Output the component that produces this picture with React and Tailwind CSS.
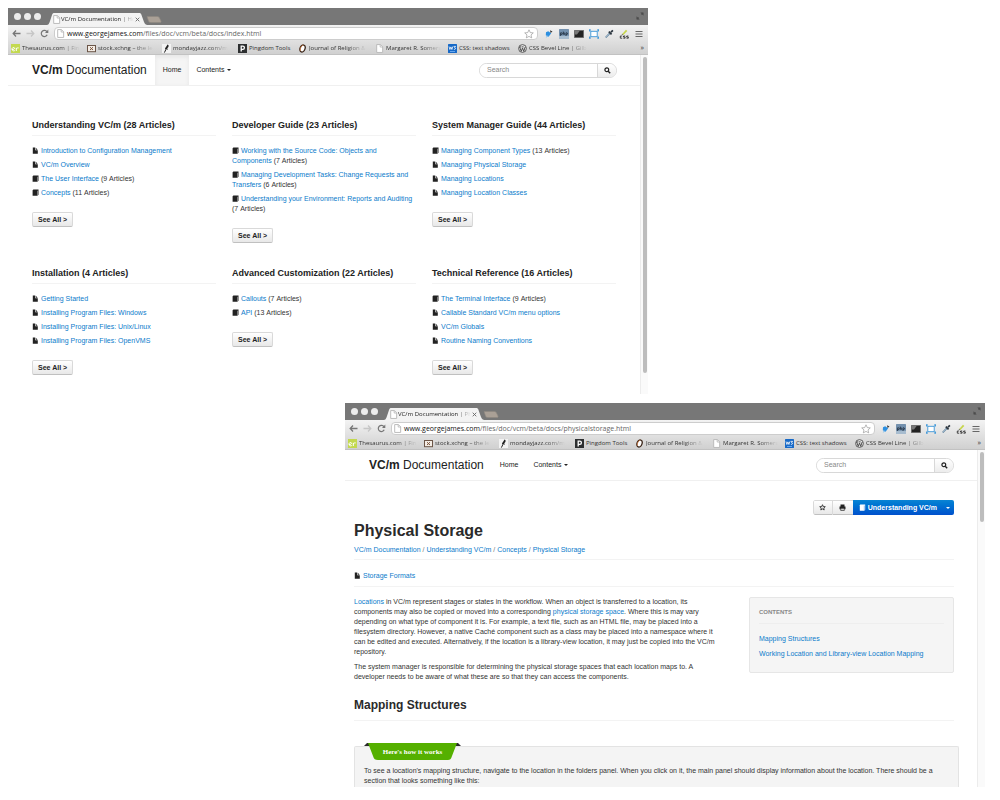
import React from "react";

const bookmarks = [
  { label: "Thesaurus.com | Fin", icon: "thesaurus", width: "w-[76px]", fade: true },
  { label: "stock.xchng – the le", icon: "stock", width: "w-[75px]", fade: true },
  { label: "mondayjazz.com/m", icon: "jazz", width: "w-[76px]", fade: true },
  { label: "Pingdom Tools", icon: "pingdom", width: "w-[60px]" },
  { label: "Journal of Religion &", icon: "journal", width: "w-[77px]", fade: true },
  { label: "Margaret R. Somers", icon: "page", width: "w-[73px]", fade: true },
  { label: "CSS: text shadows", icon: "css", width: "w-[70px]" },
  { label: "CSS Bevel Line | Gilb", icon: "wordpress", width: "w-[76px]", fade: true },
];

const sections = [
  {
    title: "Understanding VC/m (28 Articles)",
    items: [
      { label: "Introduction to Configuration Management" },
      { label: "VC/m Overview" },
      { label: "The User Interface", count: 9 },
      { label: "Concepts", count: 11 },
    ],
  },
  {
    title: "Developer Guide (23 Articles)",
    items: [
      { label: "Working with the Source Code: Objects and Components", count: 7 },
      { label: "Managing Development Tasks: Change Requests and Transfers", count: 6 },
      { label: "Understanding your Environment: Reports and Auditing", count: 7 },
    ],
  },
  {
    title: "System Manager Guide (44 Articles)",
    items: [
      { label: "Managing Component Types", count: 13 },
      { label: "Managing Physical Storage" },
      { label: "Managing Locations" },
      { label: "Managing Location Classes" },
    ],
  },
  {
    title: "Installation (4 Articles)",
    items: [
      { label: "Getting Started" },
      { label: "Installing Program Files: Windows" },
      { label: "Installing Program Files: Unix/Linux" },
      { label: "Installing Program Files: OpenVMS" },
    ],
  },
  {
    title: "Advanced Customization (22 Articles)",
    items: [
      { label: "Callouts", count: 7 },
      { label: "API", count: 13 },
    ],
  },
  {
    title: "Technical Reference (16 Articles)",
    items: [
      { label: "The Terminal Interface", count: 9 },
      { label: "Callable Standard VC/m menu options" },
      { label: "VC/m Globals" },
      { label: "Routine Naming Conventions" },
    ],
  },
];

function PageIcon({ className = "h-2 w-2" }) {
  return (
    <svg viewBox="0 0 8 8" className={className} aria-hidden="true">
      <path d="M1.5.5h3.3L6.8 2.5v5H1.5z" fill="#fff" stroke="#b5b5b5" strokeWidth=".8" />
      <path d="M4.6.5v2.2h2.2" fill="none" stroke="#b5b5b5" strokeWidth=".7" />
    </svg>
  );
}

function BookmarkIcon({ name }) {
  if (name === "page") return <PageIcon className="h-[9px] w-[9px] shrink-0" />;
  return (
    <svg viewBox="0 0 9 9" className="h-[9px] w-[9px] shrink-0" aria-hidden="true">
      {name === "thesaurus" && (
        <>
          <rect width="9" height="9" fill="#c3d94f" />
          <path d="M1 5.5c2 0 2.6-.6 2.6-1.4S1 3.2 1 5s1.6 2.3 2.8 1.6M5.3 7V3.8M5.3 5c.4-.9 1.2-1.3 2.4-1.1" fill="none" stroke="#fff" strokeWidth="1" />
        </>
      )}
      {name === "stock" && (
        <>
          <rect x=".5" y="1.5" width="8" height="6.2" fill="#f4ede6" stroke="#6b5547" />
          <path d="M3 3.2l3 2.8M6 3.2L3 6" stroke="#7d563c" strokeWidth="1" />
        </>
      )}
      {name === "jazz" && (
        <>
          <rect width="9" height="9" fill="#f3f3f3" />
          <path d="M5.5.6c1.6.4 1.3 2.3.2 3.2L4.3 5 3.4 4.1z" fill="#222" />
          <path d="M4.8 3.6L2.4 8.6M3 4.2l2.8 1" stroke="#222" strokeWidth="1" />
        </>
      )}
      {name === "pingdom" && (
        <>
          <rect width="9" height="9" fill="#2d2f30" />
          <path d="M3.2 7.6V2.2h1.6a1.5 1.5 0 010 3.2H3.4" fill="none" stroke="#fff" strokeWidth="1.3" />
        </>
      )}
      {name === "journal" && (
        <>
          <ellipse cx="4.5" cy="4.5" rx="2.5" ry="3.7" transform="rotate(20 4.5 4.5)" fill="#fff" stroke="#3a2417" strokeWidth="1.3" />
          <path d="M2.4 6.8C1.8 4 3.5 1.6 5.2 1" fill="none" stroke="#c8733b" strokeWidth=".8" />
        </>
      )}
      {name === "css" && (
        <>
          <rect width="9" height="9" rx=".6" fill="#1769c7" />
          <path d="M1 2.5l.9 3 1-2.6 1 2.6.9-3M5.6 2.4h2L6.5 3.8c1.6.2 1.2 2-.6 1.6" fill="none" stroke="#fff" strokeWidth=".8" />
          <path d="M2 7.5h5" stroke="#86c1ff" strokeWidth=".7" />
        </>
      )}
      {name === "wordpress" && (
        <>
          <circle cx="4.5" cy="4.5" r="3.9" fill="#e9e9e9" stroke="#4d4d4d" strokeWidth=".9" />
          <path d="M1.6 3l1.7 4.3L4.5 4 5.7 7.3 7.2 3M1.5 2.9h1.8M3.8 2.9h1.8" fill="none" stroke="#4d4d4d" strokeWidth="1" />
        </>
      )}
    </svg>
  );
}

function DocIcon({ book }) {
  return (
    <svg viewBox="0 0 7 7" className="mr-0.5 inline-block h-[7px] w-[7px] align-[-1px]" aria-hidden="true">
      {book ? (
        <path d="M1.4.5h5.1v5.3L5.4 6.8H.6V1.2zM5.1 1.7v4.5h.4V1.7z" fill="#222" fillRule="evenodd" />
      ) : (
        <path d="M.8.5h2.4v2.8h2.6v3.5h-5zM3.800.7l1.900 2H3.800z" fill="#222" />
      )}
    </svg>
  );
}

function Caret({ className }) {
  return (
    <svg viewBox="0 0 4 2" className={className} aria-hidden="true">
      <path d="M0 0h4L2 2z" fill="currentColor" />
    </svg>
  );
}

function ExtensionIcons() {
  return (
    <div className="flex shrink-0 items-center gap-[5px]">
      <button aria-label="Share page">
        <svg viewBox="0 0 11 10" className="h-[10px] w-[11px]">
          <path d="M3 3.2l2.2-.9 3 2-2.6 3.5-2.8-1.6z" fill="#2c8fe0" />
          <path d="M3.5 8.3l1.4-2" stroke="#62b1ed" strokeWidth="1" />
          <path d="M7 1.2l2.5 1.2L7.6 4z" fill="#333" />
        </svg>
      </button>
      <button aria-label="PHP tools">
        <svg viewBox="0 0 10 10" className="h-[10px] w-[10px]">
          <rect width="10" height="10" rx=".6" fill="#7390ad" />
          <rect y="6.8" width="10" height="3.2" fill="#a7bccf" />
          <path d="M1.6 7V3.8h.9c1 0 1 1.7 0 1.7h-.7M4.3 2.6v3.2M4.3 4.4c.3-.9 1.3-.8 1.3 0v1.4M7 7V3.8h.8c1 0 1 1.7 0 1.7h-.7" fill="none" stroke="#1d2938" strokeWidth=".8" />
        </svg>
      </button>
      <button aria-label="Terminal">
        <svg viewBox="0 0 10 10" className="h-[10px] w-[10px]">
          <rect x=".3" y="1.3" width="9.4" height="7.4" fill="#222" stroke="#777" strokeWidth=".6" />
          <path d="M.8 1.8h5L3 5.5H.8z" fill="#777" />
        </svg>
      </button>
      <button aria-label="Resize window">
        <svg viewBox="0 0 10 10" className="h-[10px] w-[10px]">
          <rect x="1.8" y="2.3" width="6.4" height="5.4" fill="#fff" stroke="#3c96d8" strokeWidth=".9" />
          <path d="M0 1h2M8 1h2M0 9h2M8 9h2M.6.5v2M9.4.5v2M.6 7.5v2M9.4 7.5v2" stroke="#3c96d8" strokeWidth="1" />
        </svg>
      </button>
      <button aria-label="Pick colour">
        <svg viewBox="0 0 10 10" className="h-[10px] w-[10px]">
          <path d="M6 4.2L1.7 8.5" stroke="#5e7f9b" strokeWidth="1.7" />
          <path d="M5.8 4.4L2 8.2" stroke="#d6e6f2" strokeWidth=".6" />
          <path d="M4.8 2.6l2.8 2.8M7 3.2l1.9-1.9" stroke="#29333d" strokeWidth="1.7" />
        </svg>
      </button>
      <button aria-label="Edit CSS">
        <svg viewBox="0 0 10 10" className="h-[10px] w-[10px]">
          <path d="M3 5.2l4-4.4 1.3 1.1-4 4z" fill="#c6d548" />
          <path d="M2.6 6l.6-1.2 1 .8z" fill="#555" />
          <path d="M3.2 7H1.3v2.2h1.9M6.2 7H4.5v1h1.6v1.2H4.3M9.4 7H7.7v1h1.6v1.2H7.5" fill="none" stroke="#222" strokeWidth=".8" />
        </svg>
      </button>
      <button aria-label="Menu">
        <svg viewBox="0 0 10 10" className="h-[10px] w-[10px]">
          <path d="M1.5 2.5h7M1.5 5h7M1.5 7.5h7" stroke="#666" strokeWidth="1.1" />
        </svg>
      </button>
    </div>
  );
}

function BrowserWindow({ tabTitle, path, thumb, children, className }) {
  return (
    <section className={`flex w-[65.5%] min-w-[640px] flex-col ${className}`}>
      <div className="flex h-[17px] items-end bg-[#777] pl-[6px] font-['Open_Sans',sans-serif]">
        <div className="mb-1 flex h-[9px] gap-[3px] self-center">
          <span className="mt-[3px] h-[7px] w-[7px] rounded-full bg-[#ececec]" />
          <span className="mt-[3px] h-[7px] w-[7px] rounded-full bg-[#ececec]" />
          <span className="mt-[3px] h-[7px] w-[7px] rounded-full bg-[#ececec]" />
        </div>
        <div className="relative ml-[5px] flex h-[12px] w-[104px] items-center">
          <svg viewBox="0 0 104 12" preserveAspectRatio="none" className="absolute inset-0 h-full w-full" aria-hidden="true">
            <path d="M0 12c3 0 3-1.5 4-4l2-6c.5-1.5 1-2 2.500-2H93c1.500 0 2 .5 2.500 2l2.500 7c1 2.500 2 3 5 3z" fill="#f3f3f3" />
          </svg>
          <PageIcon className="relative ml-[6px] h-[9px] w-[9px]" />
          <span className="relative w-[73px] overflow-hidden whitespace-nowrap text-[6px] leading-[10px] text-[#222] [mask-image:linear-gradient(to_right,black_80%,transparent)]">
            {tabTitle}
          </span>
          <button aria-label="Close tab" className="relative ml-px">
            <svg viewBox="0 0 5 5" className="h-[5px] w-[5px]">
              <path d="M.7.7l3.600 3.600M4.300.7L.7 4.300" stroke="#666" strokeWidth=".9" />
            </svg>
          </button>
        </div>
        <button aria-label="New tab" className="-ml-1 mb-[2px]">
          <svg viewBox="0 0 17 7" className="h-[7px] w-[17px]">
            <path d="M1 .5h10.500c1 0 1.500.5 2 1.500l1.500 3c.3 1-.1 1.500-1 1.500H4.500c-1 0-1.500-.5-2-1.500z" fill="#aaa096" stroke="#8f8880" strokeWidth=".6" />
          </svg>
        </button>
        <button aria-label="Full screen" className="mb-[5px] ml-auto mr-1">
          <svg viewBox="0 0 8 8" className="h-2 w-2">
            <path d="M4.800.8h2.400v2.400zM.8 4.800v2.400h2.400zM5 3l1.500-1.500M3 5L1.500 6.500" fill="#4d4d4d" stroke="#4d4d4d" strokeWidth=".6" />
          </svg>
        </button>
      </div>
      <div className="bg-linear-to-b from-[#f3f3f3] to-[#cfcfcf] font-['Open_Sans',sans-serif]">
        <div className="flex h-[17px] items-center pl-1 pr-1">
          <div className="flex w-[42px] shrink-0 items-center gap-[5px]">
            <button aria-label="Back">
              <svg viewBox="0 0 9 9" className="h-[9px] w-[9px]">
                <path d="M4 1.500L1.200 4.500 4 7.500M1.500 4.500h7" fill="none" stroke="#777" strokeWidth="1.300" />
              </svg>
            </button>
            <button aria-label="Forward">
              <svg viewBox="0 0 9 9" className="h-[9px] w-[9px]">
                <path d="M5 1.500l2.800 3L5 7.500M7.500 4.500h-7" fill="none" stroke="#c6c6c6" strokeWidth="1.300" />
              </svg>
            </button>
            <button aria-label="Reload">
              <svg viewBox="0 0 9 9" className="h-[9px] w-[9px]">
                <path d="M7.200 5.800A3.100 3.100 0 117 2.800" fill="none" stroke="#777" strokeWidth="1.200" />
                <path d="M8.300.6v3.300H5z" fill="#777" />
              </svg>
            </button>
          </div>
          <div className="mr-[5px] flex h-[13px] min-w-0 grow items-center rounded-sm border border-[#cdcdcd] bg-white pl-px pr-[3px]">
            <PageIcon className="h-[9px] w-[9px]" />
            <span className="ml-[2px] grow whitespace-nowrap text-[7px] leading-[10px] text-[#666]">
              <span className="text-[#111]">www.georgejames.com</span>
              {path}
            </span>
            <button aria-label="Bookmark this page">
              <svg viewBox="0 0 10 10" className="h-[10px] w-[10px]">
                <path d="M5 .8l1.300 2.800 3 .3-2.300 2 .7 3L5 7.400 2.300 8.900l.7-3-2.300-2 3-.3z" fill="#fff" stroke="#999" strokeWidth=".7" />
              </svg>
            </button>
          </div>
          <ExtensionIcons />
        </div>
        <nav aria-label="Bookmarks" className="flex h-[13px] items-center border-b border-[#c2c2c2] pl-[3px] pr-1">
          {bookmarks.map((b) => (
            <a key={b.label} href="#" className={`flex shrink-0 items-center gap-[2px] ${b.width}`}>
              <BookmarkIcon name={b.icon} />
              <span
                className={`whitespace-nowrap text-[6px] font-medium leading-[10px] text-[#333] ${
                  b.fade ? "[mask-image:linear-gradient(to_right,black_65%,transparent)]" : ""
                }`}
              >
                {b.label}
              </span>
            </a>
          ))}
          <button aria-label="More bookmarks" className="ml-auto text-[7px] leading-[10px] text-[#333]">
            »
          </button>
        </nav>
      </div>
      <div className="flex grow bg-white">
        <div className="min-w-0 grow">{children}</div>
        <div className="flex w-2 shrink-0 justify-center border-l border-[#ececec] bg-[#fafafa] pt-[2px]" aria-hidden="true">
          <div className={`w-1 rounded-full bg-[#bdbdbd] ${thumb}`} />
        </div>
      </div>
    </section>
  );
}

function SiteHeader({ id, homeActive }) {
  return (
    <header className="flex h-[31px] items-stretch border-b border-[#f0f0f0] pl-6 pr-[23px]">
      <a href="#" className="flex items-center pr-2 text-[12px] leading-4 text-[#222]">
        <span>
          <strong>VC/m</strong> Documentation
        </span>
      </a>
      <nav aria-label="Site" className="flex text-[7px] leading-[10px] text-[#222]">
        <a href="#" className={`flex items-center px-2 ${homeActive ? "bg-[#f5f5f5] shadow-[inset_0_2px_4px_#e5e5e5]" : ""}`}>
          Home
        </a>
        <button className="flex items-center gap-[3px] px-[7px]">
          Contents
          <Caret className="h-[2px] w-1" />
        </button>
      </nav>
      <form className="ml-auto flex h-[15px] w-[138px] self-center overflow-hidden rounded-full border border-[#d8d8d8]">
        <label htmlFor={id} className="sr-only">
          Search
        </label>
        <input
          id={id}
          type="search"
          placeholder="Search"
          className="min-w-0 grow bg-white pl-[7px] text-[7px] leading-[10px] outline-none placeholder:text-[#888]"
        />
        <button type="button" aria-label="Search" className="flex w-[19px] items-center justify-center border-l border-[#d8d8d8] bg-linear-to-b from-white to-[#ececec]">
          <svg viewBox="0 0 7 7" className="h-[7px] w-[7px]">
            <circle cx="2.800" cy="2.800" r="1.900" fill="none" stroke="#222" strokeWidth="1.200" />
            <path d="M4.200 4.200l2 2" stroke="#222" strokeWidth="1.400" />
          </svg>
        </button>
      </form>
    </header>
  );
}

function Section({ title, items }) {
  return (
    <section>
      <h2 className="border-b border-[#f3f3f3] pb-[5px] text-[9px] font-bold leading-[10px] text-[#222]">{title}</h2>
      <ul className="mt-[10px] flex flex-col gap-1">
        {items.map((item) => (
          <li key={item.label}>
            <DocIcon book={Boolean(item.count)} />
            <a href="#" className="text-[#0b7bcb]">
              {item.label}
            </a>
            {item.count ? ` (${item.count}\u00a0Articles)` : ""}
          </li>
        ))}
      </ul>
      <button className="mt-[14px] h-[15px] rounded-xs border border-[#d9d9d9] border-b-[#c0c0c0] bg-linear-to-b from-white to-[#e8e8e8] px-[5px] text-[7px] font-bold leading-[10px] text-[#222]">
        See All &gt;
      </button>
    </section>
  );
}

function IndexPage() {
  return (
    <>
      <SiteHeader id="search-index" homeActive />
      <main className="grid grid-cols-3 gap-x-4 gap-y-[25px] px-6 pb-[19px] pt-[34px] text-[7px] leading-[10px] text-[#333]">
        {sections.map((s) => (
          <Section key={s.title} {...s} />
        ))}
      </main>
    </>
  );
}

function Crumb({ children }) {
  return (
    <a href="#" className="text-[#0b7bcb]">
      {children}
    </a>
  );
}

function ArticlePage() {
  return (
    <>
      <SiteHeader id="search-article" />
      <main className="pl-[9px] pr-[18px] pt-[19px] text-[7px] leading-[10px] text-[#333]">
        <div className="pr-[5px]">
          <div className="flex justify-end">
            <div className="flex h-[15px] overflow-hidden rounded-xs">
              <button aria-label="Add to favourites" className="flex w-5 items-center justify-center rounded-l-xs border border-[#d9d9d9] border-b-[#c0c0c0] bg-linear-to-b from-white to-[#e8e8e8]">
                <svg viewBox="0 0 7 7" className="h-[7px] w-[7px]">
                  <path d="M3.500.7l.8 1.800 2 .2-1.500 1.300.4 2-1.700-1-1.700 1 .4-2L.7 2.700l2-.2z" fill="#ddd" stroke="#222" strokeWidth=".8" />
                </svg>
              </button>
              <button aria-label="Print" className="flex w-5 items-center justify-center border-y border-[#d9d9d9] border-b-[#c0c0c0] bg-linear-to-b from-white to-[#e8e8e8]">
                <svg viewBox="0 0 7 7" className="h-[7px] w-[7px]">
                  <path d="M1.500.5h4v2h-4zM.5 2.500h6v2.800h-6z" fill="#222" />
                  <path d="M1.700 4.300h3.600v2.200H1.700z" fill="#ccc" stroke="#222" strokeWidth=".6" />
                </svg>
              </button>
              <button className="flex items-center gap-[2px] bg-linear-to-b from-[#0a84d4] to-[#0050cc] pl-[6px] pr-1 text-[7px] font-bold leading-[10px] text-white">
                <svg viewBox="0 0 7 7" className="h-[7px] w-[7px]">
                  <path d="M1.200.5h5v5.200l-1 1H.8V1.200z" fill="#fff" />
                  <path d="M5.300 1.500v4.800" stroke="#2a78d0" strokeWidth=".5" />
                </svg>
                Understanding VC/m
              </button>
              <button aria-label="More sections" className="flex w-[13px] items-center justify-center bg-linear-to-b from-[#0a84d4] to-[#0050cc] text-white">
                <Caret className="h-[2px] w-1" />
              </button>
            </div>
          </div>
          <h1 className="mt-[6px] text-[16px] font-bold leading-5 text-[#2a2a2a]">Physical Storage</h1>
          <nav aria-label="Breadcrumb" className="mt-1 border-b border-[#f3f3f3] pb-1 text-[#777]">
            <Crumb>VC/m Documentation</Crumb> / <Crumb>Understanding VC/m</Crumb> / <Crumb>Concepts</Crumb> / <Crumb>Physical Storage</Crumb>
          </nav>
          <div className="border-b border-[#f3f3f3] pb-[5px] pt-[11px]">
            <DocIcon />
            <a href="#" className="text-[#0b7bcb]">
              Storage Formats
            </a>
          </div>
          <div className="mt-[10px] flex items-start gap-[29px]">
            <div className="flex min-w-0 grow flex-col gap-[5px]">
              <p>
                <a href="#" className="text-[#0b7bcb]">Locations</a> in VC/m represent stages or states in the workflow. When an object is
                transferred to a location, its components may also be copied or moved into a corresponding{" "}
                <a href="#" className="text-[#0b7bcb]">physical storage space</a>. Where this is may vary depending on what type of
                component it is. For example, a text file, such as an HTML file, may be placed into a filesystem directory. However, a
                native Caché component such as a class may be placed into a namespace where it can be edited and executed.
                Alternatively, if the location is a library-view location, it may just be copied into the VC/m repository.
              </p>
              <p>
                The system manager is responsible for determining the physical storage spaces that each location maps to. A developer
                needs to be aware of what these are so that they can access the components.
              </p>
            </div>
            <aside className="w-[205px] shrink-0 rounded-xs border border-[#e6e6e6] bg-[#f5f5f5] px-[9px] pb-[13px] pt-[9px]">
              <h2 className="border-b border-[#eeeeee] pb-[6px] text-[6px] font-bold leading-[10px] text-[#888]">CONTENTS</h2>
              <ul className="mt-[10px] flex flex-col gap-[5px] text-[#0b7bcb]">
                <li>
                  <a href="#">Mapping Structures</a>
                </li>
                <li>
                  <a href="#">Working Location and Library-view Location Mapping</a>
                </li>
              </ul>
            </aside>
          </div>
          <h2 className="mt-[13px] border-b border-[#f3f3f3] pb-[5px] text-[12px] font-bold leading-5 text-[#2a2a2a]">Mapping Structures</h2>
        </div>
        <div className="relative mt-[25px] rounded-t-xs border border-b-0 border-[#e3e3e3] bg-[#f4f4f4] px-[9px] pb-px pt-[19px]">
          <div className="absolute -top-1 left-[9px] flex h-[17px] w-[97px] items-center justify-center">
            <svg viewBox="0 0 97 17" className="absolute inset-0 h-full w-full" aria-hidden="true">
              <path d="M0 3L3 0h91l3 3z" fill="#2b2b2b" />
              <path d="M4 0h89l-5 13c-1 3-2 4-4 4H14c-3 0-4-1-5-4z" fill="#55b000" />
            </svg>
            <span className="relative font-['Liberation_Serif',serif] text-[7px] font-bold leading-[10px] text-white">Here's how it works</span>
          </div>
          <p>
            To see a location's mapping structure, navigate to the location in the folders panel. When you click on it, the main panel
            should display information about the location. There should be a section that looks something like this:
          </p>
        </div>
      </main>
    </>
  );
}

export default function App() {
  return (
    <div className="flex min-h-screen flex-col gap-[9px] bg-white pb-[10px] pl-2 pr-[15px] pt-2 font-['Liberation_Sans',Arial,sans-serif]">
      <BrowserWindow tabTitle="VC/m Documentation | Ho" path="/files/doc/vcm/beta/docs/index.html" thumb="h-[316px]" className="self-start">
        <IndexPage />
      </BrowserWindow>
      <BrowserWindow tabTitle="VC/m Documentation | Ph" path="/files/doc/vcm/beta/docs/physicalstorage.html" thumb="h-[70px]" className="self-end">
        <ArticlePage />
      </BrowserWindow>
    </div>
  );
}
